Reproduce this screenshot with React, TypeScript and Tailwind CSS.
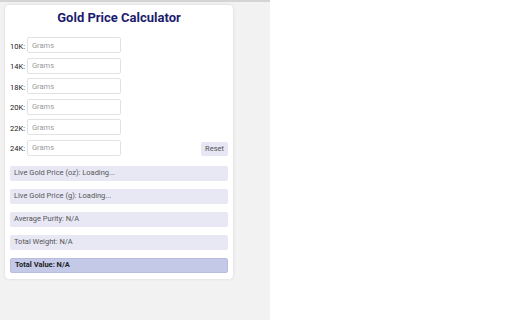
const FONT = 'Roboto, "Liberation Sans", sans-serif';

const karats = ['10K', '14K', '18K', '20K', '22K', '24K'];

const info = [
  'Live Gold Price (oz): Loading...',
  'Live Gold Price (g): Loading...',
  'Average Purity: N/A',
  'Total Weight: N/A',
];

export default function App() {
  return (
    <div className="w-[512px] h-[320px] bg-white" style={{ fontFamily: FONT }}>
      <div className="w-[270px] h-[320px] bg-[#f2f2f2] border-t-2 border-[#d4d4d4] pt-[3px] pl-[5px]">
        <div className="w-[228px] bg-white rounded-[4px] shadow-[0_0_3px_rgba(0,0,0,0.12)] px-[5px] pt-[5px] pb-[6px]">
          <h1 className="text-center text-[13px] font-bold text-[#1c1c6e] leading-[16px] mb-[11px]">
            Gold Price Calculator
          </h1>
          <div className="flex flex-col gap-[4.5px]">
            {karats.map((k, i) => (
              <div key={k} className="flex items-center h-[16px]">
                <span className="w-[17px] text-[7.5px] text-[#222] mt-[3px]">{k}:</span>
                <input
                  placeholder="Grams"
                  className="w-[94px] h-[16px] border border-[#e2e2e2] rounded-[2px] px-[4px] text-[7.5px] placeholder:text-[#999] outline-none"
                  style={{ fontFamily: FONT }}
                />
                {i === karats.length - 1 && (
                  <button
                    className="ml-auto mt-[2px] h-[14px] px-[4px] bg-[#e6e6f4] rounded-[2px] text-[7.5px] text-[#555]"
                    style={{ fontFamily: FONT }}
                  >
                    Reset
                  </button>
                )}
              </div>
            ))}
          </div>
          <div className="flex flex-col gap-[8px] mt-[10px]">
            {info.map(t => (
              <div key={t} className="h-[15px] flex items-center px-[4px] bg-[#e8e8f5] rounded-[2px] text-[7.5px] text-[#555]">
                {t}
              </div>
            ))}
            <div className="h-[15px] flex items-center px-[4px] bg-[#c5c9e8] border border-[#b8bde0] rounded-[2px] text-[7.5px] font-bold text-[#222]">
              Total Value: N/A
            </div>
          </div>
        </div>
      </div>
    </div>
  );
}
